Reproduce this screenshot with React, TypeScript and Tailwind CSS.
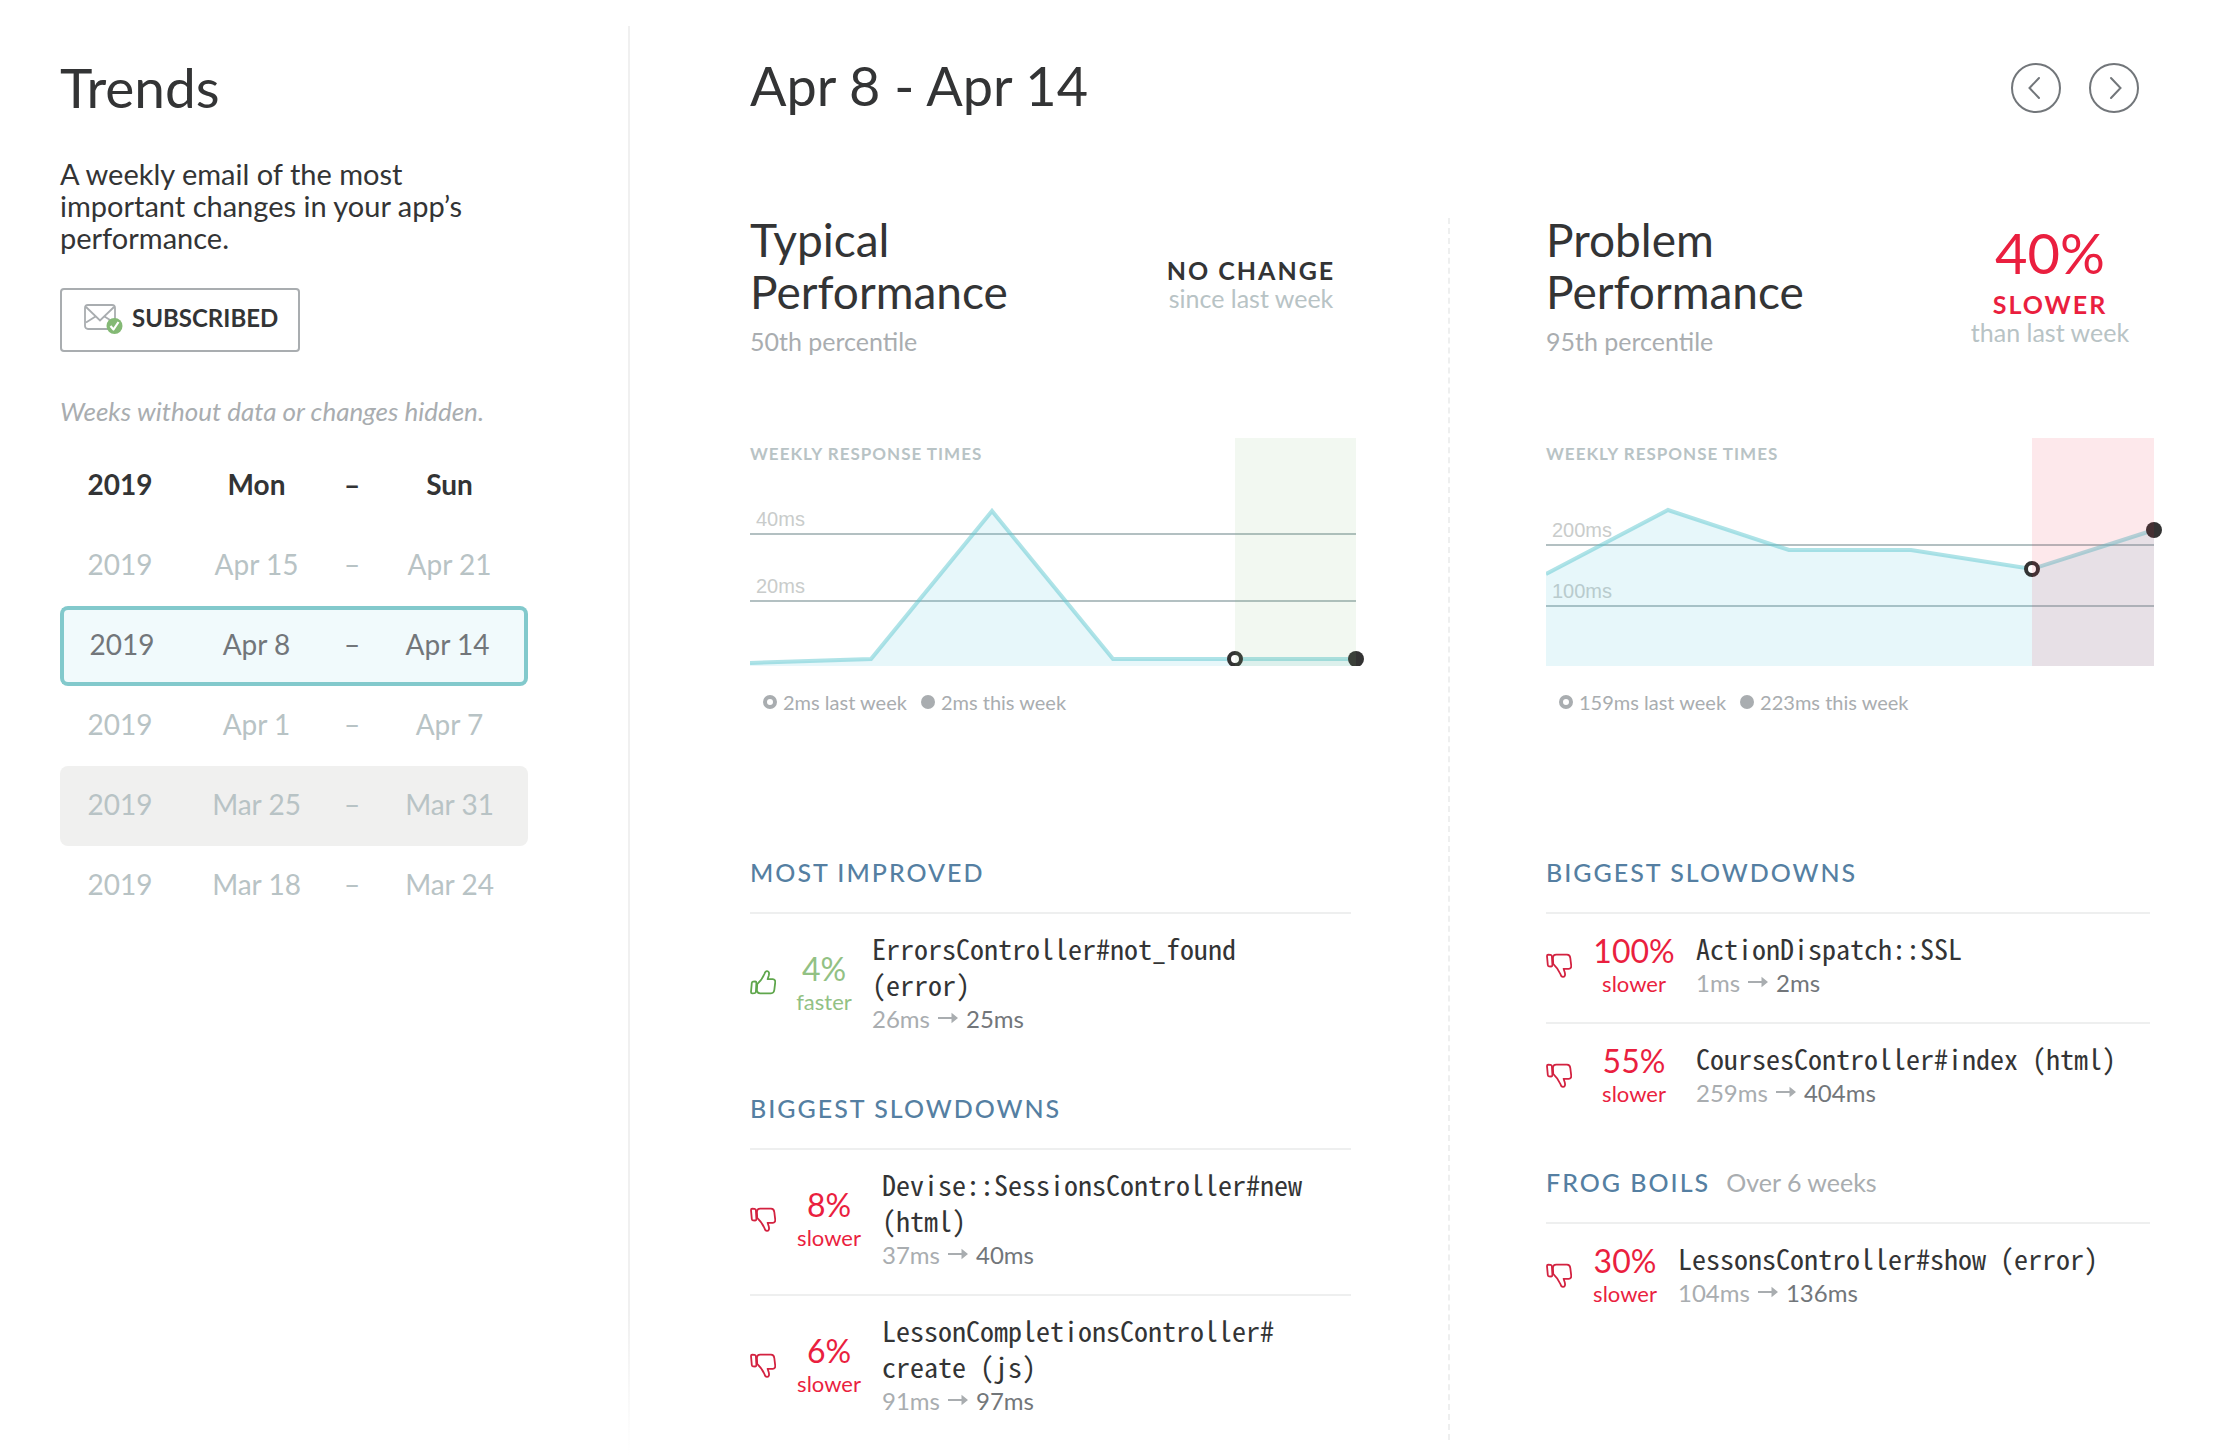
import type { ReactNode } from "react";

type Tone = "good" | "bad";

const weeks = [
  { start: "Apr 15", end: "Apr 21" },
  { start: "Apr 8", end: "Apr 14", state: "selected" },
  { start: "Apr 1", end: "Apr 7" },
  { start: "Mar 25", end: "Mar 31", state: "hover" },
  { start: "Mar 18", end: "Mar 24" },
];

function Thumb({ tone }: { tone: Tone }) {
  return (
    <svg
      viewBox="0 0 26 26"
      className={
        tone === "good"
          ? "mb-[6px] size-[26px] text-[#5fa64c]"
          : "mb-[6px] size-[26px] -scale-y-100 text-[#d32240]"
      }
      fill="none"
      stroke="currentColor"
      strokeWidth="1.8"
      strokeLinejoin="round"
      strokeLinecap="round"
      aria-hidden="true"
    >
      <path d="M3 11.6 Q1.9 11.8 1.8 13 L1 22 Q1 23.4 2.2 23.4 L4.6 23.2 Q5.8 23 5.9 21.8 L6.4 13 Q6.4 11.5 5.2 11.5Z" />
      <path d="M7.2 14.2 C10 11.5 12.8 8 14.4 4 C15 1.8 15.8 1 17.2 1.1 C19.4 1.3 19.2 3.8 18.8 5.4 L17.6 9.2 H22.8 C24.8 9.3 25.4 10.8 25.2 12.6 L24.3 20 C24 22.4 22.8 23.3 21 23.3 H10.2 C8 23.3 7 22.4 6.9 20.4 Z" />
    </svg>
  );
}

function Arrow() {
  return (
    <svg viewBox="0 0 20 16" className="mx-2 inline-block h-4 w-5 align-baseline" aria-label="to">
      <path d="M0 5 H13.5 V0.8 L20 6 L13.5 11.2 V7 H0Z" fill="#a9adb0" />
    </svg>
  );
}

function Envelope() {
  return (
    <svg viewBox="0 0 40 32" className="h-8 w-10" fill="none" aria-hidden="true">
      <rect x="1" y="3" width="30" height="24" rx="3" stroke="#a9adb0" strokeWidth="1.8" />
      <path d="M2 5 L16 18.5 L30 5 M2 20.5 L11.5 14.5 M30 20.5 L20.5 14.5" stroke="#a9adb0" strokeWidth="1.8" />
      <circle cx="30.5" cy="24" r="8" fill="#84b975" />
      <path d="M26.5 24 L29.5 27.5 L34.5 20" stroke="#fff" strokeWidth="2.2" strokeLinejoin="round" />
    </svg>
  );
}

function Sidebar() {
  return (
    <aside className="w-[628px] shrink-0 pl-[60px] pt-[55px]">
      <h1 className="text-[55px] leading-[64px]">Trends</h1>
      <p className="mt-[39px] w-[440px] text-[29px] leading-[32px]">
        A weekly email of the most important changes in your app’s performance.
      </p>
      <button
        type="button"
        className="mt-[34px] flex h-[64px] items-center gap-2 rounded border-2 border-[#a9adb0] pb-1 pl-[22px] pr-[20px] text-2xl font-bold"
      >
        <Envelope />
        SUBSCRIBED
      </button>
      <p className="mt-[43px] text-[26px] italic leading-8 text-[#a9adb0]">
        Weeks without data or changes hidden.
      </p>
      <table className="mt-[19px] w-[468px] table-fixed border-separate border-spacing-0 text-center text-[28px] leading-8">
        <thead>
          <tr className="h-20">
            <th className="w-[120px] pb-1 font-bold">2019</th>
            <th className="w-[153px] pb-1 font-bold">Mon</th>
            <th className="w-[38px] pb-1 font-bold">–</th>
            <th className="pb-1 font-bold">Sun</th>
          </tr>
        </thead>
        <tbody>
          {weeks.map((w) => {
            const sel = w.state === "selected";
            const tr = sel ? "h-20 text-[#72767a]" : "h-20 text-[#b8c3c5]";
            const mid = sel
              ? "border-y-4 border-[#82c9cc] bg-[#f1fafc] pb-1"
              : w.state === "hover"
                ? "bg-[#f0f0ef] pb-1"
                : "pb-1";
            const first = sel ? " rounded-l-lg border-l-4" : " rounded-l-lg";
            const last = sel ? " rounded-r-lg border-r-4" : " rounded-r-lg";
            return (
              <tr key={w.start} className={tr}>
                <td className={mid + first}>2019</td>
                <td className={mid}>
                  <a href="#week">{w.start}</a>
                </td>
                <td className={mid}>–</td>
                <td className={mid + last}>
                  <a href="#week">{w.end}</a>
                </td>
              </tr>
            );
          })}
        </tbody>
      </table>
    </aside>
  );
}

type ChartProps = {
  width: number;
  points: [number, number][];
  grid: { y: number; label: string }[];
  band: string;
};

function Chart({ width, points, grid, band }: ChartProps) {
  const line = points.map((p) => p.join(",")).join(" ");
  const end = points[points.length - 1];
  const prev = points[points.length - 2];
  return (
    <div className="relative -mr-[13px]">
      <h3 className="absolute left-0 top-1 text-[17px] font-bold leading-6 tracking-[1px] text-[#b8c3c5]">
        WEEKLY RESPONSE TIMES
      </h3>
      <svg viewBox={`0 0 ${width} 228`} className="block w-full">
        {grid.map((g) => (
          <g key={g.label}>
            <text x="6" y={g.y - 8} fontSize="20" fill="#c9cccb" className="font-['Liberation_Sans',sans-serif]">
              {g.label}
            </text>
            <path d={`M0 ${g.y} H${end[0]}`} stroke="#b3c0c2" strokeWidth="2" />
          </g>
        ))}
        <polygon points={`0,228 ${line} ${end[0]},228`} fill="#5fc8e0" fillOpacity="0.15" />
        <polyline points={line} fill="none" stroke="#5fc8d0" strokeOpacity="0.5" strokeWidth="4" />
        <circle cx={prev[0]} cy={prev[1]} r="6" fill="#fff" stroke="#333" strokeWidth="4" />
        <circle cx={end[0]} cy={end[1]} r="8" fill="#333" />
        <rect x={prev[0]} y="0" width={end[0] - prev[0]} height="228" className={band} />
      </svg>
    </div>
  );
}

function Legend({ last, current }: { last: string; current: string }) {
  return (
    <div className="mt-[22px] flex items-center gap-[14px] pl-[13px] text-xl leading-7 text-[#a9adb0]">
      <span className="flex items-center gap-[6px]">
        <span className="size-[14px] rounded-full border-4 border-[#a9adb0]" />
        {last} last week
      </span>
      <span className="flex items-center gap-[6px]">
        <span className="size-[14px] rounded-full bg-[#a9adb0]" />
        {current} this week
      </span>
    </div>
  );
}

type Row = { pct: string; name: ReactNode; from: string; to: string };

function Section({
  title,
  note,
  tone = "bad",
  col,
  rows,
}: {
  title: string;
  note?: string;
  tone?: Tone;
  col: string;
  rows: Row[];
}) {
  return (
    <section>
      <h3 className="flex items-baseline gap-[16px] pb-[24px] text-[25px] leading-8 text-[#557fa2]">
        <span className="font-medium tracking-[2px]">{title}</span>
        {note && <span className="text-[#a9adb0]">{note}</span>}
      </h3>
      <table className="w-full border-collapse">
        <tbody>
          {rows.map((r) => (
            <tr key={r.pct} className="border-t-2 border-[#eeefef]">
              <td className="w-[26px] align-middle">
                <Thumb tone={tone} />
              </td>
              <td
                className={
                  (tone === "good" ? "text-[#92c184] " : "text-[#ea1f3f] ") +
                  col +
                  " pb-1 text-center align-middle"
                }
              >
                <div className="text-[32px] leading-[36px]">{r.pct}</div>
                <div className="text-[22px] leading-[30px]">{tone === "good" ? "faster" : "slower"}</div>
              </td>
              <td className="pb-[22px] pt-[16px] text-2xl leading-[34px]">
                <div className="font-['Noto_Sans_Mono_CJK_SC','Liberation_Mono',monospace] text-[28px] leading-[36px]">
                  {r.name}
                </div>
                <div className="text-[#a9adb0]">
                  {r.from}
                  <Arrow />
                  <span className="text-[#72767a]">{r.to}</span>
                </div>
              </td>
            </tr>
          ))}
        </tbody>
      </table>
    </section>
  );
}

function Summary({ title, note, children }: { title: string; note: string; children: ReactNode }) {
  return (
    <div className="-mt-1 flex items-center justify-between">
      <div>
        <h2 className="w-[280px] text-[46px] leading-[52px]">{title}</h2>
        <p className="mt-[7px] pb-[1px] text-[25px] leading-8 text-[#a9adb0]">{note}</p>
      </div>
      <div className="w-[200px] pb-1 text-center text-[25px] leading-7">{children}</div>
    </div>
  );
}

function NavButton({ label, d }: { label: string; d: string }) {
  return (
    <button
      type="button"
      aria-label={label}
      className="flex size-[50px] items-center justify-center rounded-full border-2 border-[#72767a]"
    >
      <svg viewBox="0 0 24 24" className="size-6" fill="none" stroke="#72767a" strokeWidth="2" strokeLinecap="round">
        <path d={d} />
      </svg>
    </button>
  );
}

export default function App() {
  return (
    <div className="flex min-h-screen bg-white font-['Lato',sans-serif] text-[#333435]">
      <Sidebar />
      <div className="mt-[26px] w-[2px] shrink-0 bg-linear-to-b from-[#f0f0f0] from-90% to-white" />
      <main className="min-w-0 flex-1 pb-4 pl-[120px] pr-[76px] pt-[55px]">
        <header className="flex items-center justify-between pr-[11px]">
          <h2 className="pb-1 text-[54px] leading-[62px]">Apr 8 - Apr 14</h2>
          <div className="flex gap-7">
            <NavButton label="Previous week" d="M15 2 L5.5 12 L15 22" />
            <NavButton label="Next week" d="M9 2 L18.5 12 L9 22" />
          </div>
        </header>
        <div className="mt-[97px] grid grid-cols-2">
          <div className="border-r-2 border-dashed border-[#eeefef] pr-[97px]">
            <Summary title="Typical Performance" note="50th percentile">
              <div className="font-bold tracking-[2px]">NO CHANGE</div>
              <div className="text-[#b8c3c5]">since last week</div>
            </Summary>
            <div className="mt-[80px]">
              <Chart
                width={614}
                points={[[0, 225], [121, 221], [242, 73], [363, 221], [485, 221], [606, 221]]}
                grid={[{ y: 96, label: "40ms" }, { y: 163, label: "20ms" }]}
                band="fill-[#84b975]/10"
              />
            </div>
            <Legend last="2ms" current="2ms" />
            <div className="mt-[140px] flex flex-col gap-[34px]">
              <Section
                title="MOST IMPROVED"
                tone="good"
                col="w-[96px]"
                rows={[{ pct: "4%", name: <>ErrorsController#not_found<br />(error)</>, from: "26ms", to: "25ms" }]}
              />
              <Section
                title="BIGGEST SLOWDOWNS"
                col="w-[106px]"
                rows={[
                  { pct: "8%", name: <>Devise::SessionsController#new<br />(html)</>, from: "37ms", to: "40ms" },
                  { pct: "6%", name: <>LessonCompletionsController#<br />create (js)</>, from: "91ms", to: "97ms" },
                ]}
              />
            </div>
          </div>
          <div className="pl-[96px]">
            <Summary title="Problem Performance" note="95th percentile">
              <div className="mb-[7px] text-[56px] leading-[60px] text-[#ea1f3f]">40%</div>
              <div className="font-bold tracking-[2px] text-[#ea1f3f]">SLOWER</div>
              <div className="text-[#b8c3c5]">than last week</div>
            </Summary>
            <div className="mt-[80px]">
              <Chart
                width={617}
                points={[[0, 136], [122, 72], [243, 112], [365, 112], [486, 131], [608, 92]]}
                grid={[{ y: 107, label: "200ms" }, { y: 168, label: "100ms" }]}
                band="fill-[#ea1f3f]/10"
              />
            </div>
            <Legend last="159ms" current="223ms" />
            <div className="mt-[140px] flex flex-col gap-[34px]">
              <Section
                title="BIGGEST SLOWDOWNS"
                col="w-[124px]"
                rows={[
                  { pct: "100%", name: "ActionDispatch::SSL", from: "1ms", to: "2ms" },
                  { pct: "55%", name: "CoursesController#index (html)", from: "259ms", to: "404ms" },
                ]}
              />
              <Section
                title="FROG BOILS"
                note="Over 6 weeks"
                col="w-[106px]"
                rows={[{ pct: "30%", name: "LessonsController#show (error)", from: "104ms", to: "136ms" }]}
              />
            </div>
          </div>
        </div>
      </main>
    </div>
  );
}
